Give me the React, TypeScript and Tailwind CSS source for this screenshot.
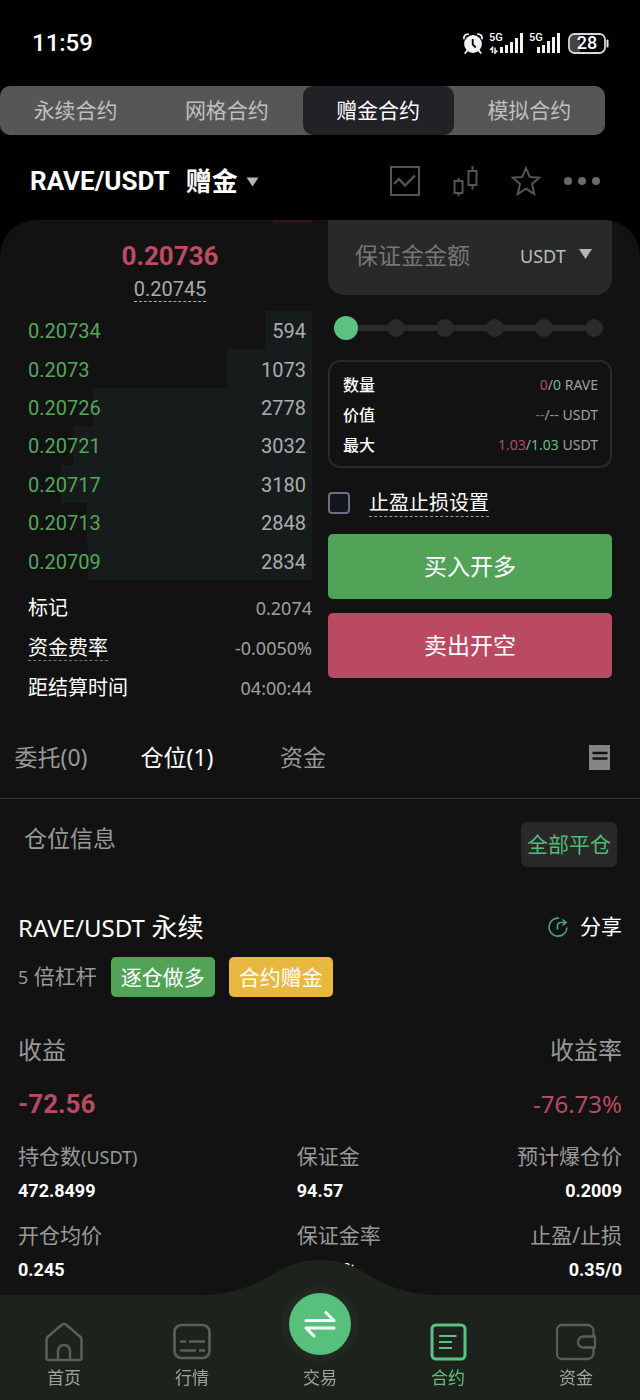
import React, { useState } from 'react';

const topTabs = ['永续合约', '网格合约', '赠金合约', '模拟合约'];

const bids = [
  { price: '0.20734', size: 594 },
  { price: '0.2073', size: 1073 },
  { price: '0.20726', size: 2778 },
  { price: '0.20721', size: 3032 },
  { price: '0.20717', size: 3180 },
  { price: '0.20713', size: 2848 },
  { price: '0.20709', size: 2834 },
];
const MAX_DEPTH = 3600;

const marketInfo = [
  { label: '标记', value: '0.2074', hint: false },
  { label: '资金费率', value: '-0.0050%', hint: true },
  { label: '距结算时间', value: '04:00:44', hint: false },
];

const orderInfo = [
  { label: '数量', short: '0', long: '0', unit: 'RAVE' },
  { label: '价值', short: '--', long: '--', unit: 'USDT' },
  { label: '最大', short: '1.03', long: '1.03', unit: 'USDT' },
];

const positionStats = [
  { label: '持仓数', suffix: '(USDT)', value: '472.8499' },
  { label: '保证金', suffix: '', value: '94.57' },
  { label: '预计爆仓价', suffix: '', value: '0.2009' },
  { label: '开仓均价', suffix: '', value: '0.245' },
  { label: '保证金率', suffix: '', value: '24.06%' },
  { label: '止盈/止损', suffix: '', value: '0.35/0' },
];

function StatusBar() {
  return (
    <div className="flex h-[86px] items-center justify-between pr-[31px] pl-8 font-['Roboto',sans-serif]">
      <span className="text-2xl font-medium">11:59</span>
      <div className="flex items-center gap-1.5">
        <svg width="20" height="21" viewBox="0 0 20 21" fill="#f2f2f2">
          <circle cx="10" cy="11" r="8.900" />
          <path d="M1 5.500C0.500 3 2.600 1 5 1.100M19 5.500C19.500 3 17.400 1 15 1.100M4.200 17.600l-2 2.400M15.800 17.600l2 2.400" stroke="#f2f2f2" strokeWidth="1.800" fill="none" strokeLinecap="round" />
          <path d="M9.700 6v5.500l3 3" stroke="#000" strokeWidth="1.800" fill="none" />
        </svg>
        <div className="relative h-[22px] w-[34px]">
          <span className="absolute top-0 left-0 text-[11px] leading-[11px] font-medium">5G</span>
          <svg width="34" height="22" viewBox="0 0 34 22" fill="#f2f2f2">
            <path d="M11 15h3v6h-3zM16 13h3v8h-3zM21 10h3v11h-3zM26 6h3v15h-3zM31 1h3v20h-3z" />
            <path d="M3.500 21v-5.500L1 18M6 15.500v5.500l2.500-2.500" stroke="#f2f2f2" strokeWidth="1.500" fill="none" />
          </svg>
        </div>
        <div className="relative h-[22px] w-[31px]">
          <span className="absolute top-0 left-0 text-[11px] leading-[11px] font-medium">5G</span>
          <svg width="31" height="22" viewBox="0 0 31 22" fill="#f2f2f2">
            <path d="M8 15h3v6H8zM13 13h3v8h-3zM18 9h3v12h-3zM23 5h3v16h-3zM28 1h3v20h-3z" />
          </svg>
        </div>
        <div className="relative ml-0.5 flex h-[21px] w-[41px] items-center">
          <svg className="absolute inset-0" width="41" height="21" viewBox="0 0 41 21">
            <path d="M6 2h6v17H6a4 4 0 0 1-4-4V6a4 4 0 0 1 4-4z" fill="#444" />
            <rect x="1" y="1" width="36" height="19" rx="5.500" stroke="#d8d8d8" strokeWidth="1.800" fill="none" />
            <path d="M39.500 7.500v6" stroke="#e5e5e5" strokeWidth="2" strokeLinecap="round" />
          </svg>
          <span className="relative w-[38px] text-center text-lg leading-5 font-medium">28</span>
        </div>
      </div>
    </div>
  );
}

function PairHeader() {
  return (
    <header className="flex h-[85px] items-center justify-between pt-1.5 pr-10 pl-[30px]">
      <button className="flex items-center pt-0.5">
        <span className="font-['Roboto',sans-serif] text-[26px] font-bold">RAVE/USDT</span>
        <span className="ml-4 text-[26px] font-bold">赠金</span>
        <svg className="ml-2" width="13" height="10" viewBox="0 0 13 10">
          <path d="M0.500 0.500h12L6.500 9.500z" fill="#b5b5b5" />
        </svg>
      </button>
      <div className="flex items-center text-[#555]">
        <button aria-label="走势">
          <svg width="30" height="30" viewBox="0 0 30 30" fill="none" stroke="currentColor">
            <rect x="1" y="1" width="28" height="28" strokeWidth="2" />
            <path d="M4 18l5-5 6 6.500L25 9.500" strokeWidth="2.400" />
          </svg>
        </button>
        <button aria-label="K线" className="ml-[33px]">
          <svg width="25" height="30" viewBox="0 0 25 30" fill="none" stroke="currentColor" strokeWidth="2">
            <path d="M1.500 15h8v12h-8zM15.500 5h8v14h-8zM5.500 12v3M5.500 27v3M19.500 0v5M19.500 19v4.500" />
          </svg>
        </button>
        <button aria-label="收藏" className="ml-[33px]">
          <svg width="30" height="30" viewBox="0 0 30 30" fill="none" stroke="currentColor" strokeWidth="2">
            <path d="M15 2.200l3.700 8.700 9.500.8-7.200 6.200 2.300 10.200-8.300-5.400-8.300 5.400L9 17.900l-7.200-6.200 9.500-.8z" />
          </svg>
        </button>
        <button aria-label="更多" className="ml-[23px]">
          <svg width="36" height="8" viewBox="0 0 36 8" fill="#6a6a6a">
            <circle cx="4" cy="4" r="4" />
            <circle cx="18" cy="4" r="4" />
            <circle cx="32" cy="4" r="4" />
          </svg>
        </button>
      </div>
    </header>
  );
}

function OrderBook() {
  return (
    <div>
      <div className="flex h-[3px] justify-end">
        <div className="w-[39px] bg-[#2a1519]" />
      </div>
      <div className="flex flex-col items-center font-['Roboto',sans-serif]">
        <p className="mt-[15px] text-[26px] leading-9 font-bold text-[#bf4a64]">0.20736</p>
        <p className="mt-[3px] border-b border-dashed border-[#aaa] text-xl leading-6 text-[#aaa]">0.20745</p>
      </div>

      {/* Bids */}
      <div className="mt-[9px] grid h-[269px] auto-rows-fr font-['Roboto',sans-serif] text-xl">
        {bids.map((bid) => (
          <div key={bid.price} className="relative flex items-center justify-between pt-0.5 pr-1.5">
            <div
              className="absolute inset-y-0 right-0 bg-[#151c1b]"
              style={{ width: `${(bid.size / MAX_DEPTH) * 100}%` }}
            />
            <span className="relative text-[#54a75a]">{bid.price}</span>
            <span className="relative text-[#adadad]">{bid.size}</span>
          </div>
        ))}
      </div>

      <div className="mt-2">
        {marketInfo.map((item) => (
          <div key={item.label} className="flex h-10 items-center justify-between">
            <span
              className={`border-b border-dashed text-[20px] leading-[25px] ${
                item.hint ? 'border-[#777]' : 'border-transparent'
              }`}
            >
              {item.label}
            </span>
            <span className="text-lg text-[#a0a0a0]">{item.value}</span>
          </div>
        ))}
      </div>
    </div>
  );
}

function OrderForm() {
  const [ratio, setRatio] = useState(0);

  return (
    <div>
      <div className="flex h-[75px] items-center rounded-b-2xl bg-[#282929] pr-5 pb-1 pl-[27px]">
        <input
          type="text"
          aria-label="保证金金额"
          placeholder="保证金金额"
          className="min-w-0 flex-1 bg-transparent text-[23px] outline-none placeholder:text-[#777]"
        />
        <select aria-label="单位" className="w-[47px] appearance-none bg-transparent text-lg text-[#bdbdbd] outline-none">
          <option>USDT</option>
        </select>
        <svg className="mb-1 ml-3" width="13" height="10" viewBox="0 0 13 10">
          <path d="M0 0h13L6.500 10z" fill="#b5b5b5" />
        </svg>
      </div>

      {/* Leverage slider */}
      <div className="relative mx-1.5 mt-[21px] flex h-6 items-center">
        <div className="absolute inset-x-3 h-1.5 bg-[#2a2b2b]" />
        <div className="absolute inset-x-[3px] flex justify-between">
          {[0, 1, 2, 3, 4, 5].map((stop) => (
            <div key={stop} className="h-[18px] w-[18px] rounded-full bg-[#2a2b2b]" />
          ))}
        </div>
        <input
          type="range"
          aria-label="仓位比例"
          min={0}
          max={100}
          value={ratio}
          onChange={(e) => setRatio(Number(e.target.value))}
          className="relative h-6 w-full appearance-none bg-transparent [&::-webkit-slider-thumb]:h-6 [&::-webkit-slider-thumb]:w-6 [&::-webkit-slider-thumb]:appearance-none [&::-webkit-slider-thumb]:rounded-full [&::-webkit-slider-thumb]:bg-[#5cc283]"
        />
      </div>

      <div className="mt-5 rounded-xl border-2 border-[#2a2a2a] pt-2 pr-3 pb-1.5 pl-[13px]">
        {orderInfo.map((item) => (
          <div key={item.label} className="flex h-[30px] items-center justify-between">
            <span className="text-base font-medium">{item.label}</span>
            <span className="text-sm text-[#a0a0a0]">
              <span className="text-[#b94a62]">{item.short}</span>/
              <span className="text-[#5cc283]">{item.long}</span> {item.unit}
            </span>
          </div>
        ))}
      </div>

      <label className="mt-5 flex h-[30px] items-center">
        <input type="checkbox" className="h-[22px] w-[22px] appearance-none rounded border-2 border-[#697083] bg-[#15161b] checked:bg-[#5cc283]" />
        <span className="ml-[19px] border-b border-dashed border-[#999] text-[20px] leading-[26px]">止盈止损设置</span>
      </label>

      <div className="mt-4 grid gap-3.5 text-[23px]">
        <button className="h-[65px] rounded-[5px] bg-[#52a358]">买入开多</button>
        <button className="h-[65px] rounded-[5px] bg-[#b94a62]">卖出开空</button>
      </div>
    </div>
  );
}

function Position() {
  return (
    <section className="px-[18px]">
      <div className="mt-10 flex h-10 items-center justify-between">
        <h2 className="text-[26px]">
          <span className="text-2xl">RAVE/USDT</span> 永续
        </h2>
        <button className="flex items-center gap-3 text-[21px]">
          <svg width="20" height="20" viewBox="0 0 20 20" fill="none" stroke="#4ba675" strokeWidth="1.600">
            <path d="M11 1.200A9 9 0 1 0 19 10.500" />
            <path d="M9.500 12.500V9q0-3.500 3.500-3.500h4M14.500 2.500l3.500 3-3.500 3" />
          </svg>
          分享
        </button>
      </div>
      <div className="mt-2.5 flex items-center gap-3.5 text-[21px]">
        <span className="text-[#999]">
          <span className="text-lg">5</span> 倍杠杆
        </span>
        <span className="rounded-[5px] bg-[#52a358] px-2.5 leading-10">逐仓做多</span>
        <span className="rounded-[5px] bg-[#e9b93f] px-2.5 leading-10">合约赠金</span>
      </div>

      <div className="mt-[33px] flex justify-between text-2xl leading-10 text-[#999]">
        <span>收益</span>
        <span>收益率</span>
      </div>
      <div className="mt-3.5 flex items-center justify-between leading-10 text-[#b94a62]">
        <span className="font-['Roboto',sans-serif] text-[26px] font-bold">-72.56</span>
        <span className="text-2xl leading-10">-76.73%</span>
      </div>

      <dl className="mt-4 grid grid-cols-[6fr_4fr_3fr] gap-y-3 whitespace-nowrap">
        {positionStats.map((stat) => (
          <div key={stat.label} className="nth-[3n]:text-right">
            <dt className="h-8 text-[21px] leading-8 text-[#999]">
              {stat.label}
              {stat.suffix && <span className="text-lg leading-8">{stat.suffix}</span>}
            </dt>
            <dd className="mt-[3px] font-['Roboto',sans-serif] text-lg leading-8 font-bold">{stat.value}</dd>
          </div>
        ))}
      </dl>
    </section>
  );
}

function BottomNav() {
  return (
    <nav className="fixed inset-x-0 bottom-0 grid h-[105px] grid-cols-5 grid-rows-[105px] bg-[#1d221d] text-[17px] leading-6 text-[#a0a39f]">
      <svg className="absolute -top-[35px] left-1/2 -translate-x-1/2" width="250" height="36" viewBox="0 0 250 36" fill="#1d221d">
        <path d="M0 36C50 34 65 21 87 9C100 2 113 0 125 0S150 2 163 9C185 21 200 34 250 36z" />
      </svg>
      <button className="relative flex flex-col items-center justify-end gap-1 pb-2.5">
        <svg width="38" height="40" viewBox="0 0 38 40" fill="none" stroke="#566058" strokeWidth="2.500" strokeLinejoin="round">
          <path d="M1.500 17.500q0-1.500 1-2.500L16.500 3q2.500-2 5 0L35.500 15q1 1 1 2.500V36q0 2-2 2h-31q-2 0-2-2z" />
          <path d="M13 38V29a6 6 0 0 1 12 0v9" />
        </svg>
        首页
      </button>
      <button className="relative flex flex-col items-center justify-end gap-1 pb-2.5">
        <svg width="38" height="40" viewBox="0 0 38 40" fill="none" stroke="#566058" strokeWidth="2.700">
          <rect x="1.500" y="3" width="35" height="33" rx="7" />
          <path d="M7 19.500h6M16 19.500h16M7 28.500h16M26 28.500h6" />
        </svg>
        行情
      </button>
      <button className="relative flex flex-col items-center justify-end gap-[11px] pb-2.5">
        <span className="flex h-[62px] w-[62px] shrink-0 items-center justify-center rounded-full bg-[#58c07d] ring-8 ring-[#1e281f]">
          <svg width="32" height="28" viewBox="0 0 32 28" fill="none" stroke="#fff" strokeWidth="3" strokeLinecap="round" strokeLinejoin="round">
            <path d="M2 10.500h28L22 2.500M30 18H2l8 8" />
          </svg>
        </span>
        交易
      </button>
      <button className="relative flex flex-col items-center justify-end gap-1 pb-2.5 text-[#5cc283]">
        <svg width="38" height="40" viewBox="0 0 38 40" fill="none" stroke="currentColor" strokeWidth="3">
          <rect x="3" y="3" width="33" height="34" rx="4" />
          <path d="M10 14h17.500M10 20h13M10 26h13" strokeWidth="2.200" />
        </svg>
        合约
      </button>
      <button className="relative flex flex-col items-center justify-end gap-1 pb-2.5">
        <svg width="40" height="40" viewBox="0 0 40 40" fill="none" stroke="#566058" strokeWidth="2.300">
          <path d="M37.500 14V9a6 6 0 0 0-6-6H6a5 5 0 0 0-5 5v24a5 5 0 0 0 5 5h25.500a6 6 0 0 0 6-6v-5" />
          <path d="M39 14.500H27.500a5.500 5.500 0 0 0 0 11H39z" />
        </svg>
        资金
      </button>
    </nav>
  );
}

export default function App() {
  return (
    <div className="min-h-screen bg-black font-['Noto_Sans','Noto_Sans_CJK_SC',sans-serif] text-white">
      <StatusBar />

      <div className="mr-[35px] grid h-[49px] grid-cols-4 rounded-[10px] bg-[#565656] text-[21px] text-[#bfbfc4]">
        {topTabs.map((tab) => (
          <button key={tab} className={tab === '赠金合约' ? 'rounded-[10px] bg-[#212126] text-white' : ''}>
            {tab}
          </button>
        ))}
      </div>

      <PairHeader />

      <main className="min-h-[calc(100vh-220px)] overflow-hidden rounded-t-[36px] bg-[#121212] pb-[105px]">
        <div className="grid grid-cols-2 gap-4 px-7">
          <OrderBook />
          <OrderForm />
        </div>

        {/* Orders / positions tabs */}
        <div className="flex h-[91px] items-center border-b border-[#303030] pt-2 pr-[30px] text-[23px] text-[#999]">
          <button className="-ml-3 w-[126px]">委托(0)</button>
          <button className="w-[126px] text-white">仓位(1)</button>
          <button className="w-[126px]">资金</button>
          <button aria-label="历史记录" className="ml-auto">
            <svg width="21" height="25" viewBox="0 0 21 25">
              <path d="M0 0h21v25H0z" fill="#858585" />
              <path d="M4.500 8h13M4.500 13.500h13" stroke="#121212" strokeWidth="2.500" strokeLinecap="round" />
            </svg>
          </button>
        </div>

        <div className="mt-[23px] flex items-start justify-between pr-[23px] pl-6">
          <h3 className="text-[23px] leading-8 text-[#999]">仓位信息</h3>
          <button className="h-[45px] rounded-md bg-[#282828] px-1.5 text-[21px] text-[#55b878]">全部平仓</button>
        </div>

        <Position />
      </main>

      <BottomNav />
    </div>
  );
}
